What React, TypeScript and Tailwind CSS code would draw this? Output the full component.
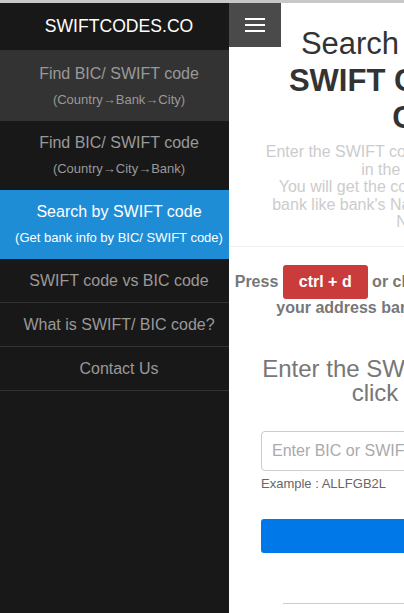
type MenuItem = {
  title: string;
  sub?: string;
  selected?: boolean;
  hover?: boolean;
};

const menu: MenuItem[] = [
  { title: 'Find BIC/ SWIFT code', sub: '(Country→Bank→City)', hover: true },
  { title: 'Find BIC/ SWIFT code', sub: '(Country→City→Bank)' },
  { title: 'Search by SWIFT code', sub: '(Get bank info by BIC/ SWIFT code)', selected: true },
  { title: 'SWIFT code vs BIC code' },
  { title: 'What is SWIFT/ BIC code?' },
  { title: 'Contact Us' },
];

function Sidebar() {
  return (
    <aside className="w-[229px] shrink-0 bg-[#191818]">
      <div className="h-[47px] flex items-center justify-center pl-[9px] text-white text-[17.6px]">
        SWIFTCODES.CO
      </div>
      <nav>
        {menu.map((m, i) =>
          m.sub ? (
            <a
              key={i}
              href="#"
              className={`block pl-[9px] pb-[8px] text-center ${i === 0 ? 'pt-[12px]' : 'pt-[10px]'} ${
                m.selected ? 'bg-[#1f8dd6] text-white' : m.hover ? 'bg-[#333] text-[#999]' : 'text-[#999]'
              }`}
            >
              <div className="text-[16px] leading-[24px]">{m.title}</div>
              <div className="text-[13px] leading-[27px]">{m.sub}</div>
            </a>
          ) : (
            <a
              key={i}
              href="#"
              className="h-[44px] flex items-center justify-center pl-[9px] border-b border-[#333] text-[16px] text-[#999]"
            >
              {m.title}
            </a>
          )
        )}
      </nav>
    </aside>
  );
}

export default function App() {
  return (
    <div className="w-[404px] h-[613px] overflow-hidden bg-white font-['Liberation_Sans',Arial,sans-serif]">
      <div className="h-[3px] bg-[#c8c8c8]" />
      <div className="flex h-[610px]">
        <Sidebar />

        <main className="relative w-[404px] shrink-0">
          {/* hamburger */}
          <button className="absolute left-0 top-0 w-[52px] h-[44px] bg-[#4a4a4a] flex flex-col items-center justify-center gap-[4px]">
            <span className="block w-[20px] h-[2px] bg-white" />
            <span className="block w-[20px] h-[2px] bg-white" />
            <span className="block w-[20px] h-[2px] bg-white" />
          </button>

          <header className="px-[32px] pt-[22px] pb-[15px] border-b border-[#eee] text-center">
            <h1 className="text-[31px] leading-[37px] text-[#333] font-normal">
              Search for bank by <b className="font-bold">SWIFT Code or BIC Code</b>
            </h1>
            <h2 className="mt-[7px] text-[16px] leading-[17.6px] text-[#ccc]">
              Enter the SWIFT code or BIC code of the bank in the box provided.
              <br />
              You will get the complete information of the bank like bank's Name, Address, City, Phone Numbers.
            </h2>
          </header>

          <p className="mt-[18px] text-center text-[16px] leading-[normal] font-bold text-[#777]">
            Press{' '}
            <span className="inline-block px-4 py-2 bg-[#ca3c3c] text-white rounded-[3px]">ctrl + d</span>{' '}
            or click the bookmark star icon in your address bar to bookmark this page.
          </p>

          <div className="px-[32px]">
            <h3 className="mt-[40px] text-center text-[24px] leading-[24px] text-[#777]">
              Enter the SWIFT/ BIC code and
              <br />
              click on search
            </h3>
            <input
              className="mt-[26px] block w-full h-[40px] border border-[#ccc] rounded-[4px] px-[10px] text-[16px] text-[#333] placeholder:text-[#aaa] outline-none"
              placeholder="Enter BIC or SWIFT code here"
            />
            <p className="mt-[5px] text-[13px] leading-[normal] text-[#666]">Example : ALLFGB2L</p>
            <button className="mt-[28px] block w-full h-[34px] bg-[#0078e7] text-white rounded-[3px] text-[16px]">
              Search
            </button>
            <div className="mt-[50px] ml-[22px] border-t border-[#ccc]" />
          </div>
        </main>
      </div>
    </div>
  );
}
